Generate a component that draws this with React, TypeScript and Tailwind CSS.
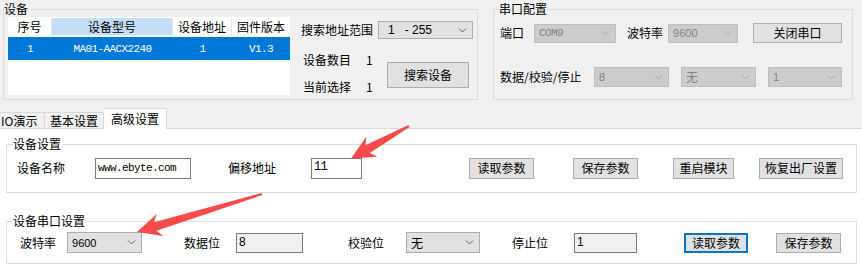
import React from "react";

function Chevron({ color = "#606060" }: { color?: string }) {
  return (
    <svg width="9" height="5" viewBox="0 0 9 5" className="shrink-0">
      <polyline points="1,0.5 4.5,4 8,0.5" fill="none" stroke={color} strokeWidth="1" />
    </svg>
  );
}

function GroupBox({
  title,
  className,
  legendClass = "",
  children,
}: {
  title: string;
  className: string;
  legendClass?: string;
  children: React.ReactNode;
}) {
  return (
    <fieldset className={`border border-[#dcdcdc] ${className}`}>
      <legend className={`pr-[2px] text-[12px] leading-[14px] ${legendClass}`}>{title}</legend>
      {children}
    </fieldset>
  );
}

function Combo({
  text,
  className,
  disabled = false,
  textClass = "",
}: {
  text: string;
  className: string;
  disabled?: boolean;
  textClass?: string;
}) {
  return (
    <div
      className={`flex items-center justify-between border pr-[5px] ${
        disabled ? "border-[#bfbfbf] bg-[#cccccc] text-[#838383]" : "border-[#adadad] bg-[#e1e1e1] text-black"
      } ${className}`}
    >
      <span className={`whitespace-pre ${textClass}`}>{text}</span>
      <Chevron color={disabled ? "#a6a6a6" : "#606060"} />
    </div>
  );
}

function Btn({ text, className }: { text: string; className: string }) {
  return (
    <div
      className={`flex items-center justify-center border border-[#adadad] bg-[#e1e1e1] text-[12px] leading-[14px] ${className}`}
    >
      {text}
    </div>
  );
}

function TextBox({ text, className }: { text: string; className: string }) {
  return (
    <div className={`border border-[#7a7a7a] ${className}`}>
      <span className="whitespace-pre">{text}</span>
    </div>
  );
}

export default function App() {
  return (
    <div className="relative h-[276px] w-[862px] overflow-hidden bg-[#f0f0f0] font-['Noto_Sans_CJK_SC','Noto_Sans',sans-serif] text-[12px] leading-[14px] text-black">
      {/* top: device list + serial config */}
      <div className="flex h-[100px] pl-[3px] pt-[2px]">
        <GroupBox title="设备" className="h-[98px] w-[475px]">
          <div className="flex">
            <div className="ml-[4px] mt-[1px] h-[78px] w-[282px] bg-white">
              <div className="mt-[1px] flex h-[17px] leading-[17px]">
                <div className="w-[44px] border-r border-[#e5e5e5] text-center">序号</div>
                <div className="w-[121px] border-r border-[#e5e5e5] bg-[#c4def5] text-center">设备型号</div>
                <div className="w-[59px] border-r border-[#e5e5e5] text-center">设备地址</div>
                <div className="w-[58px] text-center">固件版本</div>
              </div>
              <div className="mt-[2px] flex h-[23px] items-center bg-[#0078d7] font-['Liberation_Mono',monospace] text-[11px] tracking-[-0.6px] text-white">
                <div className="w-[44px] text-center">1</div>
                <div className="w-[121px] text-center">MA01-AACX2240</div>
                <div className="w-[59px] text-center">1</div>
                <div className="w-[58px] text-center">V1.3</div>
              </div>
            </div>

            <div className="ml-[11px] flex flex-col">
              <div className="mt-[5px] flex h-[18px] items-center">
                <span>搜索地址范围</span>
                <Combo
                  text="1   - 255"
                  className="ml-[5px] h-[18px] w-[95px] pl-[9px]"
                  textClass="font-['Liberation_Sans',sans-serif] text-[12px]"
                />
              </div>
              <div className="flex">
                <div className="ml-[2px] w-[84px]">
                  <div className="mt-[14px] flex h-[14px]">
                    <span>设备数目</span>
                    <span className="ml-[15px]">1</span>
                  </div>
                  <div className="mt-[13px] flex h-[14px]">
                    <span>当前选择</span>
                    <span className="ml-[15px]">1</span>
                  </div>
                </div>
                <Btn text="搜索设备" className="mt-[23px] h-[26px] w-[82px]" />
              </div>
            </div>
          </div>
        </GroupBox>

        <GroupBox title="串口配置" className="ml-[15px] h-[98px] w-[360px]" legendClass="ml-[5px]">
          <div className="mt-[7px] flex h-[20px] items-center">
            <span className="ml-[6px]">端口</span>
            <Combo
              text="COM9"
              disabled
              className="ml-[10px] h-[19px] w-[82px] pl-[4px]"
              textClass="font-['Liberation_Mono',monospace] text-[11px] tracking-[-0.6px]"
            />
            <span className="ml-[11px]">波特率</span>
            <Combo
              text="9600"
              disabled
              className="ml-[5px] h-[19px] w-[70px] pl-[4px]"
              textClass="font-['Liberation_Sans',sans-serif] text-[11px]"
            />
            <Btn text="关闭串口" className="ml-[15px] h-[20px] w-[89px]" />
          </div>
          <div className="mt-[24px] flex h-[20px] items-center">
            <span className="ml-[6px] w-[94px]">数据/校验/停止</span>
            <Combo
              text="8"
              disabled
              className="h-[20px] w-[75px] pl-[4px]"
              textClass="font-['Liberation_Sans',sans-serif] text-[11px]"
            />
            <Combo text="无" disabled className="ml-[12px] h-[20px] w-[75px] pl-[4px]" />
            <Combo
              text="1"
              disabled
              className="ml-[12px] h-[20px] w-[74px] pl-[4px]"
              textClass="font-['Liberation_Sans',sans-serif] text-[11px]"
            />
          </div>
        </GroupBox>
      </div>

      {/* tabs */}
      <div className="mt-[8px] flex h-[20px] items-end">
        <div className="h-[16px] w-[45px] border border-b-0 border-l-0 border-[#d9d9d9] pl-[1px] leading-[16px]">
          IO演示
        </div>
        <div className="h-[16px] w-[59px] border border-b-0 border-l-0 border-[#d9d9d9] text-center leading-[16px]">
          基本设置
        </div>
        <div className="relative z-10 mb-[-1px] h-[21px] w-[63px] border border-b-0 border-l-0 border-[#d9d9d9] bg-white text-center leading-[20px]">
          高级设置
        </div>
      </div>

      {/* tab panel */}
      <div className="h-[148px] border-t border-[#d9d9d9] bg-white">
        <GroupBox title="设备设置" className="ml-[6px] mt-[8px] h-[56px] w-[851px]" legendClass="ml-[6px]">
          <div className="mt-[6px] flex h-[22px] items-center">
            <span className="ml-[10px]">设备名称</span>
            <TextBox
              text="www.ebyte.com"
              className="ml-[30px] flex h-[21px] w-[96px] items-center bg-white pl-[2px] font-['Liberation_Mono',monospace] text-[11px] tracking-[-0.6px]"
            />
            <span className="ml-[37px]">偏移地址</span>
            <TextBox
              text="11"
              className="ml-[35px] flex h-[21px] w-[51px] items-center bg-white pb-[2px] pl-[2px] font-['Liberation_Mono',monospace] text-[12px] tracking-[-0.8px]"
            />
            <Btn text="读取参数" className="ml-[107px] h-[21px] w-[65px]" />
            <Btn text="保存参数" className="ml-[39px] h-[21px] w-[65px]" />
            <Btn text="重启模块" className="ml-[35px] h-[21px] w-[61px]" />
            <Btn text="恢复出厂设置" className="ml-[25px] h-[21px] w-[84px]" />
          </div>
        </GroupBox>

        <GroupBox title="设备串口设置" className="ml-[6px] mt-[21px] h-[50px] w-[851px]" legendClass="ml-[6px]">
          <div className="mt-[4px] flex h-[21px] items-center">
            <span className="ml-[13px]">波特率</span>
            <Combo
              text="9600"
              className="ml-[11px] h-[21px] w-[75px] pl-[4px]"
              textClass="font-['Liberation_Sans',sans-serif] text-[11px]"
            />
            <span className="ml-[42px]">数据位</span>
            <TextBox
              text="8"
              className="ml-[16px] h-[20px] w-[67px] bg-[#f0f0f0] pl-[2px] pt-[1px] font-['Liberation_Sans',sans-serif] text-[12px]"
            />
            <span className="ml-[45px]">校验位</span>
            <Combo text="无" className="ml-[22px] h-[21px] w-[74px] pl-[4px]" />
            <span className="ml-[32px]">停止位</span>
            <TextBox
              text="1"
              className="ml-[26px] h-[20px] w-[63px] bg-[#f0f0f0] pl-[2px] pt-[1px] font-['Liberation_Sans',sans-serif] text-[12px]"
            />
            <div className="ml-[47px] flex h-[20px] w-[64px] items-center justify-center border-2 border-[#0078d7] bg-[#e1e1e1]">
              读取参数
            </div>
            <Btn text="保存参数" className="ml-[28px] h-[20px] w-[65px]" />
          </div>
        </GroupBox>
      </div>

      {/* red annotation arrows drawn over the screenshot */}
      <svg className="pointer-events-none absolute left-0 top-0" width="862" height="276">
        <polygon
          fill="#f74a4a"
          points="351,158.5 377.5,156.8 369.8,153.1 409.5,126.9 408.5,125.1 365.4,145.3 366.3,136.8"
        />
        <polygon
          fill="#f74a4a"
          points="137,232 163.3,236 156.5,230.8 262.3,195 261.7,193 153.9,222.2 156.6,214"
        />
      </svg>
    </div>
  );
}
